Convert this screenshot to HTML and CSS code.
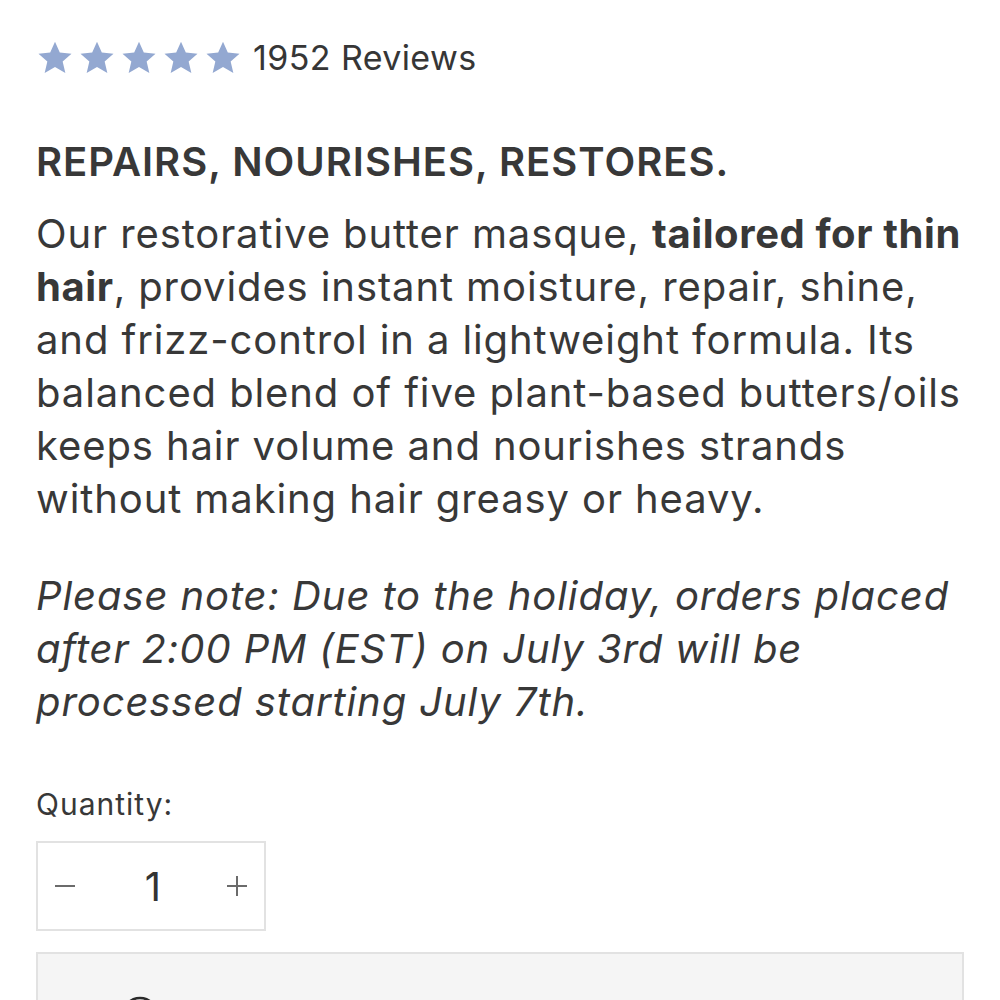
FILE: index.html
```html
<!DOCTYPE html>
<html>
<head>
<meta charset="utf-8">
<link rel="stylesheet" href="styles.css">
</head>
<body>
<div class="page">
  <div class="rating">
    <div class="stars">
      <svg viewBox="0 0 24 24" class="star"><path d="M12 1.2l3.2 7.2 7.8.7-5.9 5.2 1.8 7.7L12 18l-6.9 4 1.8-7.7L1 9.1l7.8-.7z"/></svg>
      <svg viewBox="0 0 24 24" class="star"><path d="M12 1.2l3.2 7.2 7.8.7-5.9 5.2 1.8 7.7L12 18l-6.9 4 1.8-7.7L1 9.1l7.8-.7z"/></svg>
      <svg viewBox="0 0 24 24" class="star"><path d="M12 1.2l3.2 7.2 7.8.7-5.9 5.2 1.8 7.7L12 18l-6.9 4 1.8-7.7L1 9.1l7.8-.7z"/></svg>
      <svg viewBox="0 0 24 24" class="star"><path d="M12 1.2l3.2 7.2 7.8.7-5.9 5.2 1.8 7.7L12 18l-6.9 4 1.8-7.7L1 9.1l7.8-.7z"/></svg>
      <svg viewBox="0 0 24 24" class="star"><path d="M12 1.2l3.2 7.2 7.8.7-5.9 5.2 1.8 7.7L12 18l-6.9 4 1.8-7.7L1 9.1l7.8-.7z"/></svg>
    </div>
    <span class="reviews">1952 Reviews</span>
  </div>
  <h2 class="headline">REPAIRS, NOURISHES, RESTORES.</h2>
  <p class="desc">Our restorative butter masque, <strong>tailored for thin hair</strong>, provides instant moisture, repair, shine, and frizz-control in a lightweight formula. Its balanced blend of five plant-based butters/oils keeps hair volume and nourishes strands without making hair greasy or heavy.</p>
  <p class="note">Please note: Due to the holiday, orders placed after 2:00 PM (EST) on July 3rd will be processed starting July 7th.</p>
  <div class="qty-label">Quantity:</div>
  <div class="qty">
    <svg class="qty-icon" viewBox="0 0 20 20"><path d="M0 10h20" stroke="#6b6b6b" stroke-width="2"/></svg>
    <span class="qty-val">1</span>
    <svg class="qty-icon" viewBox="0 0 20 20"><path d="M0 10h20M10 0v20" stroke="#6b6b6b" stroke-width="2"/></svg>
  </div>
  <div class="cta">
    <svg class="cta-icon" viewBox="0 0 40 40"><circle cx="20" cy="20" r="17" fill="none" stroke="#2a2a2a" stroke-width="2.5"/></svg>
    <span class="cta-text">l</span>
  </div>
</div>
</body>
</html>
```
FILE: styles.css
```css
html, body {
  margin: 0;
  padding: 0;
  background: #fff;
}
body {
  font-family: Inter, "Noto Sans", sans-serif;
  color: #383838;
}
.page {
  padding: 29px 36px 0 36px;
}
.rating {
  display: flex;
  align-items: center;
  height: 58px;
}
.stars {
  display: flex;
  gap: 6px;
  margin-left: 1px;
  margin-right: 12px;
}
.star {
  width: 36px;
  height: 36px;
  fill: #93a8d1;
}
.reviews {
  font-size: 34px;
  line-height: 58px;
  letter-spacing: 0.4px;
  color: #363636;
}
.headline {
  margin: 50px 0 0 0;
  font-size: 40px;
  font-weight: 600;
  line-height: 50px;
  letter-spacing: 1px;
  color: #383838;
}
.desc {
  margin: 20px 0 0 0;
  font-size: 40px;
  line-height: 53px;
  letter-spacing: 0.9px;
  color: #383838;
}
.desc strong {
  font-weight: 700;
  letter-spacing: 0.6px;
}
.note {
  margin: 44px 0 0 0;
  font-size: 40px;
  line-height: 53px;
  font-style: italic;
  letter-spacing: 0.9px;
  color: #383838;
}
.qty-label {
  margin-top: 56px;
  font-size: 30px;
  line-height: 40px;
  letter-spacing: 1px;
}
.qty {
  margin-top: 17px;
  width: 230px;
  height: 90px;
  box-sizing: border-box;
  border: 2px solid #e2e2e2;
  display: flex;
  align-items: center;
  justify-content: space-between;
  padding: 0 17px 0 17px;
}
.qty-icon {
  width: 20px;
  height: 20px;
}
.qty-val {
  font-size: 40px;
  color: #333;
  margin-left: 4px;
}
.cta {
  margin-top: 21px;
  height: 120px;
  box-sizing: border-box;
  border: 2px solid #e2e2e2;
  background: #f5f5f5;
  display: flex;
  align-items: flex-start;
  gap: 30px;
  padding: 41px 0 0 82px;
}
.cta-icon {
  width: 40px;
  height: 40px;
  flex: none;
}
.cta-text {
  font-size: 40px;
  line-height: 40px;
  color: #2a2a2a;
}
```
